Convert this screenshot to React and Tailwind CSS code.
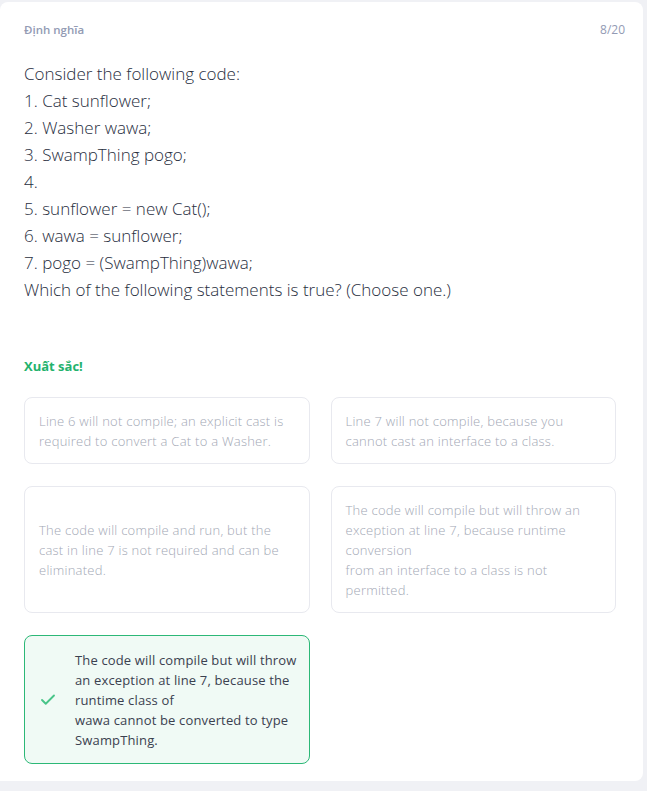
import { Check } from 'lucide-react';

const codeLines = [
  'Consider the following code:',
  '1. Cat sunflower;',
  '2. Washer wawa;',
  '3. SwampThing pogo;',
  '4.',
  '5. sunflower = new Cat();',
  '6. wawa = sunflower;',
  '7. pogo = (SwampThing)wawa;',
  'Which of the following statements is true? (Choose one.)',
];

const options = [
  { lines: ['Line 6 will not compile; an explicit cast is required to convert a Cat to a Washer.'] },
  { lines: ['Line 7 will not compile, because you cannot cast an interface to a class.'] },
  { lines: ['The code will compile and run, but the cast in line 7 is not required and can be eliminated.'] },
  {
    lines: [
      'The code will compile but will throw an exception at line 7, because runtime conversion',
      'from an interface to a class is not permitted.',
    ],
  },
  {
    correct: true,
    lines: [
      'The code will compile but will throw an exception at line 7, because the runtime class of',
      'wawa cannot be converted to type SwampThing.',
    ],
  },
];

const Option = ({ option }) => {
  if (option.correct) {
    return (
      <div className="flex items-center gap-[18px] rounded-lg border border-[#2cb877] bg-[#f0faf5] pt-[14px] pb-[13px] pl-[14px] pr-3">
        <Check className="h-[18px] w-[18px] shrink-0 text-[#48c488]" strokeWidth={2.5} />
        <div className="text-[13px] leading-5 tracking-[0.15px] text-[#3b4150]">
          {option.lines.map((line, i) => (
            <div key={i}>{line}</div>
          ))}
        </div>
      </div>
    );
  }

  return (
    <div className="flex items-center rounded-lg border border-[#e8e9ef] bg-white pt-[13px] pb-3 pl-[14px] pr-3">
      <div className="text-[13px] font-light leading-5 tracking-[0.25px] text-[#a3a8b5]">
        {option.lines.map((line, i) => (
          <div key={i}>{line}</div>
        ))}
      </div>
    </div>
  );
};

const App = () => {
  return (
    <div
      className="min-h-screen bg-[#f0f1f5] pt-[2px] pr-[4px]"
      style={{ fontFamily: '"Open Sans", Lato, sans-serif' }}
    >
      <div className="h-[779px] rounded-r-lg rounded-tl-lg bg-white pt-5 pl-6 pr-[27px]">
        {/* Header */}
        <div className="flex items-center justify-between">
          <span className="text-[11.5px] font-semibold leading-4 text-[#939bb4]">Định nghĩa</span>
          <span className="-mr-[9px] text-[12px] leading-4 text-[#939bb4]">8/20</span>
        </div>

        {/* Question */}
        <div className="mt-[22px] text-[17px] font-light leading-[27px] text-[#282e3e]">
          {codeLines.map((line, i) => (
            <div key={i}>{line}</div>
          ))}
        </div>

        <div className="mt-[54px] text-[13px] font-bold leading-[18px] text-[#23b26d]">Xuất sắc!</div>

        {/* Answers */}
        <div className="mt-[22px] grid grid-cols-2 gap-x-[21px] gap-y-[22px]">
          {options.map((option, i) => (
            <Option key={i} option={option} />
          ))}
        </div>
      </div>
    </div>
  );
};

export default App;
